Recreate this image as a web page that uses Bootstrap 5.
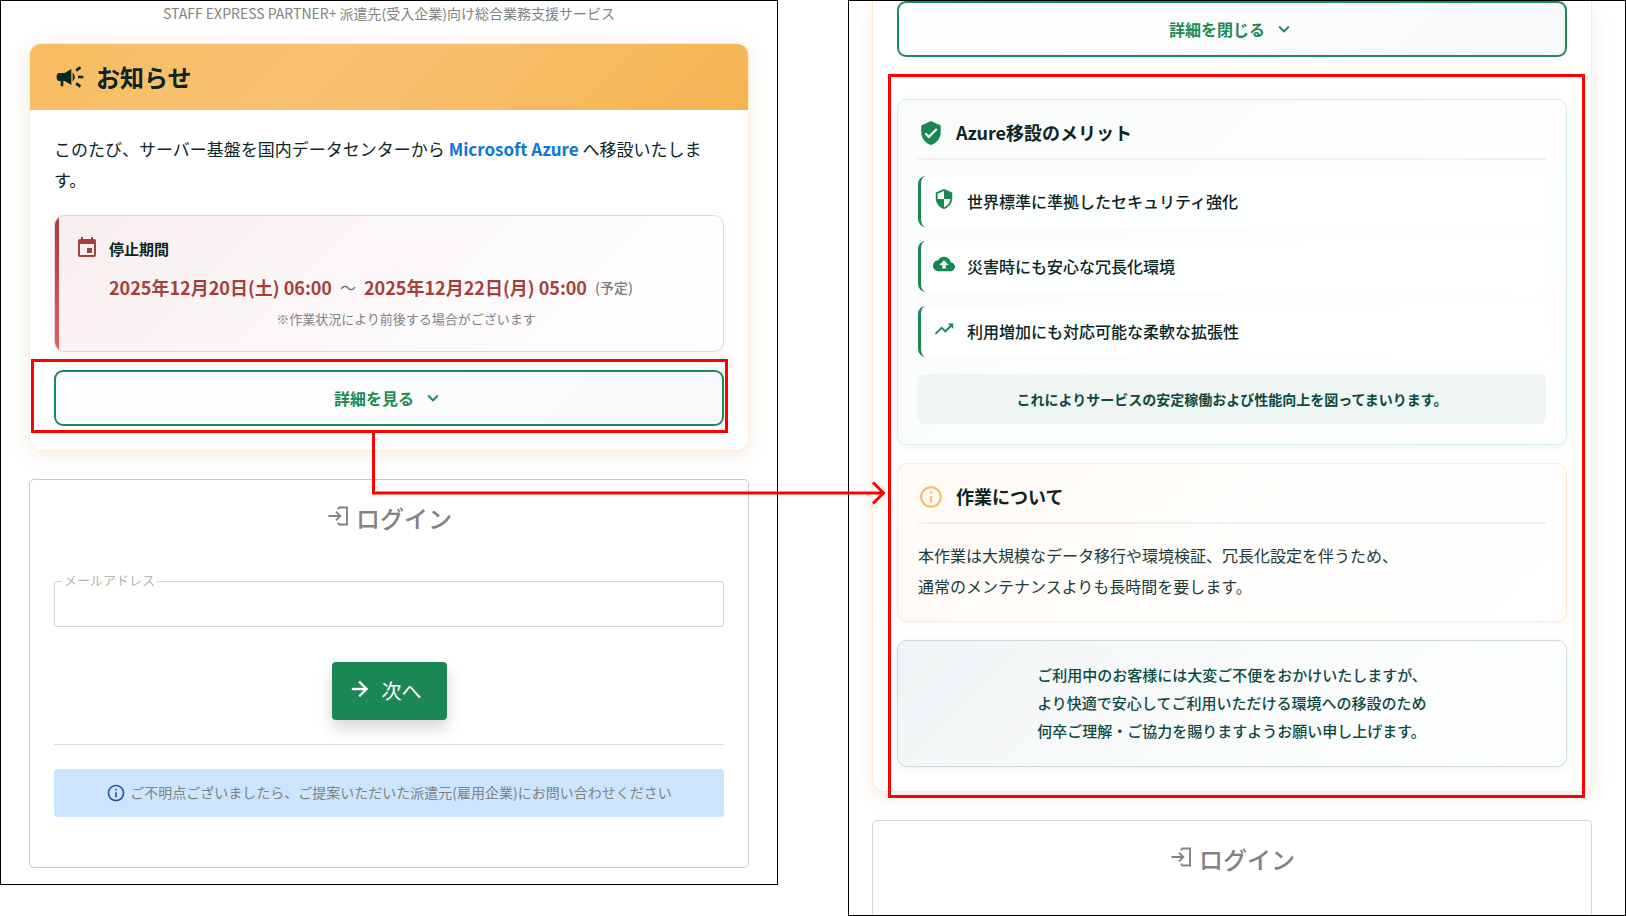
<!DOCTYPE html>
<html lang="ja">
<head>
<meta charset="utf-8">
<meta name="viewport" content="width=device-width, initial-scale=1">
<title>STAFF EXPRESS PARTNER+ ログイン</title>
<link rel="stylesheet" href="https://cdn.jsdelivr.net/npm/bootstrap@5.3.0/dist/css/bootstrap.min.css">
<style>
  body { font-family: "Noto Sans CJK JP", "Noto Sans", sans-serif; color: #0b2523; background: #fff; }
  .page { gap: 70px; }
  .screen { flex: 1 1 0; min-width: 0; border: 1px solid #000; background: #fff; }
  .screen-top { padding: 2px 28px 16px; }
  .screen-more { padding: 0 33px 0 23px; overflow: hidden; }
  .tagline { font-size: 14px; line-height: 21px; margin-bottom: 19px; color: #828282; }

  .notice { border: 1px solid #fdecd3; border-radius: 12px; margin-bottom: 28px; box-shadow: 0 4px 20px rgba(170, 130, 60, .14); }
  .notice-open { border-top: 0; border-radius: 0 0 12px 12px; }
  .notice-head { height: 66px; gap: 10px; padding: 0 24px; border-radius: 11px 11px 0 0; font-size: 24px; font-weight: 700; background: linear-gradient(135deg, #f8bd62 0%, #f8c273 40%, #f5b452 100%); }
  .notice-body { padding: 23px 24px 24px; }
  .notice-text { font-size: 17px; line-height: 31px; margin-bottom: 20px; }
  .azure { color: #0a78d4; font-weight: 700; }

  .period { gap: 10px; padding: 20px; margin-bottom: 18px; border: 1px solid #ecd3d5; border-radius: 10px; background: linear-gradient(135deg, #f8eeef 0%, #fcf8f9 50%, #fff 100%); box-shadow: 0 4px 14px rgba(168, 62, 62, .06); overflow: hidden; position: relative; }
  .period::before { content: ""; position: absolute; inset: 0 auto 0 0; width: 4px; background: linear-gradient(#a53f3d, #e06061); }
  .period-title { font-size: 15px; line-height: 26px; font-weight: 700; margin-bottom: 10px; }
  .period-dates { gap: 8px; line-height: 30px; margin-bottom: 6px; }
  .period-date { font-size: 18px; font-weight: 700; color: #a83e3b; }
  .period-tilde { font-size: 16px; color: #5a6a68; }
  .period-plan { font-size: 14px; font-weight: 500; color: #7a7a7a; }
  .period-note { font-size: 13px; line-height: 22px; margin-bottom: 1px; color: #828282; }

  .toggle { height: 56px; gap: 8px; border: 2px solid #1e8a58; border-radius: 9px; font-size: 16px; font-weight: 700; color: #1e8a58; background: linear-gradient(135deg, #fff 0%, #fdfdfd 40%, #f6f8fa 100%); }
  .toggle:hover { border-color: #1e8a58; color: #1e8a58; }

  /* red call-outs laid over the screens */
  .marker { position: absolute; border: 3px solid #f00; pointer-events: none; z-index: 5; }
  .marker-button { inset: -11px -4px -7px -23px; }
  .marker-details { inset: -4px -18px -31px -9px; }
  .marker-arrow { position: absolute; left: 338px; top: 100%; }

  .details { margin-top: 20px; padding-top: 21px; border-top: 1px solid #f0f1f1; }
  .panel-box { padding: 20px; margin-bottom: 18px; border: 1px solid; border-radius: 10px; }
  .merit { border-color: #dceee6; background: linear-gradient(135deg, #f9fcfb, #fcfefd 50%, #fff); box-shadow: 0 2px 8px rgba(30, 138, 88, .09); }
  .work { padding-bottom: 19px; border-color: #fde8cf; background: linear-gradient(135deg, #fffaf5, #fffefc 50%, #fff); box-shadow: 0 2px 8px rgba(245, 180, 82, .08); }
  .closing { padding-bottom: 21px; border-color: #cddada; margin-bottom: 0; background: linear-gradient(135deg, #f0f4f6, #fafbfb 50%, #fff); box-shadow: 0 2px 8px rgba(11, 74, 66, .08); }
  .box-title { gap: 12px; padding-bottom: 12px; margin-bottom: 16px; border-bottom: 2px solid #eff1f1; font-size: 18px; line-height: 24px; font-weight: 700; }
  .merit-list { gap: 14px; margin-bottom: 17px; }
  .merit-item { height: 51px; gap: 12px; padding: 0 12px 2px; border-left: 3px solid #198754; border-radius: 8px; font-size: 16px; font-weight: 500; background: rgba(255, 255, 255, .8); }
  .merit-item svg { margin-bottom: 3px; }
  .merit-sum { padding: 10px; line-height: 30px; font-size: 14px; font-weight: 700; border-radius: 6px; color: #0b4a42; background: #eef5f2; }
  .work-text { font-size: 16px; line-height: 31px; color: #203a38; }
  .closing-text { font-size: 15px; line-height: 28px; font-weight: 500; color: #0b4a42; }

  .login { padding: 20px 24px 50px; border: 1px solid #c8c8c8; border-radius: 5px; background: #fff; }
  .login-cut { border-bottom: 0; border-radius: 5px 5px 0 0; border-color: #d4d6d6; padding-bottom: 20px; }
  .login-title { gap: 5px; font-size: 24px; line-height: 36px; font-weight: 500; color: #828282; }
  .login-title svg { margin-bottom: 4px; }
  .mail { margin-top: 45px; }
  .mail-input { height: 46px; border: 1px solid #cdd3da; border-radius: 3px; }
  .mail-label { position: absolute; left: 8px; top: -11px; padding: 0 2px; font-size: 13px; line-height: 20px; color: #b4b4b4; background: #fff; }
  .next { height: 58px; gap: 10px; margin-top: 35px; padding: 0 25px 0 16px; border: 0; border-radius: 4px; font-size: 20px; font-weight: 400; color: #fff; background: #1a8754; box-shadow: 0 8px 16px rgba(0, 0, 0, .16); }
  .next:hover { color: #fff; background: #1a8754; }
  .next svg { margin-bottom: 4px; }
  .rule { margin: 24px 0; border-top: 1px solid #d8dde2; opacity: 1; }
  .help { padding: 11px 12px 13px; gap: 4px; font-size: 14px; line-height: 24px; border-radius: 4px; color: #828282; background: #cce5ff; }
  .help svg { margin-top: 2px; }
</style>
</head>
<body>
<svg class="d-none" aria-hidden="true">
  <symbol id="i-login" viewBox="0 0 24 24"><path fill="none" stroke="currentColor" stroke-width="1.9" d="M12 3.500H20.500V20.500H12M12 3.500V5.500M12 20.500V18.500M2 12H13.500M9.500 7.700L13.800 12L9.500 16.300"/></symbol>
  <symbol id="i-chevron" viewBox="0 0 24 24"><path fill="currentColor" d="M7.410 8.590L12 13.170l4.590-4.580L18 10l-6 6-6-6z"/></symbol>
  <symbol id="i-info" viewBox="0 0 24 24"><path fill="currentColor" d="M11 7h2v2h-2zm0 4h2v6h-2zm1-9C6.480 2 2 6.480 2 12s4.480 10 10 10 10-4.480 10-10S17.520 2 12 2zm0 18c-4.410 0-8-3.590-8-8s3.590-8 8-8 8 3.590 8 8-3.590 8-8 8z"/></symbol>
</svg>

<div class="page d-flex align-items-start min-vh-100">
  <main class="screen screen-top">
    <p class="tagline text-center">STAFF EXPRESS PARTNER+ 派遣先(受入企業)向け総合業務支援サービス</p>

    <section class="notice card">
      <h1 class="notice-head d-flex align-items-center mb-0">
        <svg width="32" height="32" viewBox="0 0 24 24" fill="currentColor"><path d="M18 11v2h4v-2h-4zm-2 6.610c.96.71 2.210 1.650 3.200 2.390.4-.53.8-1.070 1.200-1.600-.99-.74-2.240-1.680-3.200-2.400-.4.54-.8 1.080-1.200 1.610zM20.400 5.600c-.4-.53-.8-1.070-1.200-1.600-.99.74-2.240 1.680-3.200 2.400.4.53.8 1.070 1.200 1.600.96-.72 2.210-1.650 3.200-2.400zM4 9c-1.100 0-2 .9-2 2v2c0 1.100.9 2 2 2h1v4h2v-4h1l5 3V6L8 9H4zm11.500 3c0-1.330-.58-2.530-1.500-3.350v6.690c.92-.81 1.500-2.010 1.500-3.340z"/></svg>
        お知らせ
      </h1>
      <div class="card-body notice-body">
        <p class="notice-text">このたび、サーバー基盤を国内データセンターから <span class="azure">Microsoft Azure</span> へ移設いたします。</p>
        <div class="period d-flex align-items-start">
          <svg class="flex-shrink-0" width="24" height="24" viewBox="0 0 24 24" fill="#a83e3b"><path d="M17 12h-5v5h5v-5zM16 1v2H8V1H6v2H5c-1.110 0-1.990.9-1.990 2L3 19c0 1.100.89 2 2 2h14c1.100 0 2-.9 2-2V5c0-1.100-.9-2-2-2h-1V1h-2zm3 18H5V8h14v11z"/></svg>
          <div class="flex-grow-1">
            <div class="period-title">停止期間</div>
            <div class="period-dates d-flex flex-wrap align-items-center">
              <span class="period-date">2025年12月20日(土) 06:00</span>
              <span class="period-tilde">〜</span>
              <span class="period-date">2025年12月22日(月) 05:00</span>
              <span class="period-plan">(予定)</span>
            </div>
            <div class="period-note text-center">※作業状況により前後する場合がございます</div>
          </div>
        </div>
        <div class="position-relative">
          <button type="button" class="toggle btn w-100 d-flex align-items-center justify-content-center">詳細を見る
            <svg width="22" height="22"><use href="#i-chevron"/></svg>
          </button>
          <div class="marker marker-button">
            <svg class="marker-arrow" width="516" height="76" viewBox="0 0 516 76" fill="none" stroke="#f00" stroke-width="3"><path d="M1.500 0V63H511M501 52.500L511.500 63L501 73.500"/></svg>
          </div>
        </div>
      </div>
    </section>

    <form class="login">
      <h2 class="login-title d-flex align-items-center justify-content-center mb-0"><svg width="25" height="24"><use href="#i-login"/></svg>ログイン</h2>
      <div class="mail position-relative">
        <input type="email" id="mail" class="mail-input form-control">
        <label for="mail" class="mail-label">メールアドレス</label>
      </div>
      <button type="button" class="next btn d-flex align-items-center mx-auto">
        <svg width="24" height="24" viewBox="0 0 24 24" fill="currentColor" stroke="currentColor" stroke-width=".4"><path d="M12 4l-1.410 1.410L16.170 11H4v2h12.170l-5.580 5.590L12 20l8-8z"/></svg>
        次へ
      </button>
      <hr class="rule">
      <div class="help d-flex align-items-center justify-content-center">
        <svg width="20" height="20" color="#2a5596"><use href="#i-info"/></svg>
        ご不明点ございましたら、ご提案いただいた派遣元(雇用企業)にお問い合わせください
      </div>
    </form>
  </main>

  <section class="screen screen-more align-self-stretch d-flex flex-column">
    <div class="notice notice-open card">
      <div class="card-body px-4 pt-0 pb-4">
        <button type="button" class="toggle btn w-100 d-flex align-items-center justify-content-center">詳細を閉じる
          <svg width="22" height="22"><use href="#i-chevron"/></svg>
        </button>
        <div class="details position-relative">
          <section class="panel-box merit">
            <h3 class="box-title d-flex align-items-start">
              <svg width="26" height="26" viewBox="0 0 24 24" fill="#198754"><path d="M12 1L3 5v6c0 5.550 3.840 10.740 9 12 5.160-1.260 9-6.450 9-12V5l-9-4zm-2 16l-4-4 1.410-1.410L10 14.170l6.590-6.590L18 9l-8 8z"/></svg>
              Azure移設のメリット
            </h3>
            <ul class="merit-list list-unstyled d-flex flex-column">
              <li class="merit-item d-flex align-items-center">
                <svg width="22" height="22" viewBox="0 0 24 24" fill="#198754"><path d="M12 1L3 5v6c0 5.550 3.840 10.740 9 12 5.160-1.260 9-6.450 9-12V5l-9-4zm0 10.990h7c-.53 4.120-3.280 7.790-7 8.940V12H5V6.300l7-3.110v8.800z"/></svg>
                世界標準に準拠したセキュリティ強化
              </li>
              <li class="merit-item d-flex align-items-center">
                <svg width="22" height="22" viewBox="0 0 24 24" fill="#198754"><path d="M19.350 10.040C18.670 6.590 15.640 4 12 4 9.110 4 6.600 5.640 5.350 8.040 2.340 8.360 0 10.910 0 14c0 3.310 2.690 6 6 6h13c2.760 0 5-2.240 5-5 0-2.640-2.050-4.780-4.650-4.960zM14 13v4h-4v-4H7l5-5 5 5h-3z"/></svg>
                災害時にも安心な冗長化環境
              </li>
              <li class="merit-item d-flex align-items-center">
                <svg width="22" height="22" viewBox="0 0 24 24" fill="#198754"><path d="M16 6l2.290 2.290-4.880 4.880-4-4L2 16.590 3.410 18l6-6 4 4 6.300-6.290L22 12V6z"/></svg>
                利用増加にも対応可能な柔軟な拡張性
              </li>
            </ul>
            <p class="merit-sum text-center mb-0">これによりサービスの安定稼働および性能向上を図ってまいります。</p>
          </section>
          <section class="panel-box work">
            <h3 class="box-title d-flex align-items-start">
              <svg width="26" height="26" color="#f8ba60"><use href="#i-info"/></svg>
              作業について
            </h3>
            <p class="work-text mb-0">本作業は大規模なデータ移行や環境検証、冗長化設定を伴うため、<br>通常のメンテナンスよりも長時間を要します。</p>
          </section>
          <section class="panel-box closing d-flex justify-content-center">
            <p class="closing-text mb-0">ご利用中のお客様には大変ご不便をおかけいたしますが、<br>より快適で安心してご利用いただける環境への移設のため<br>何卒ご理解・ご協力を賜りますようお願い申し上げます。</p>
          </section>
          <div class="marker marker-details"></div>
        </div>
      </div>
    </div>
    <div class="login login-cut flex-grow-1">
      <h2 class="login-title d-flex align-items-center justify-content-center mb-0"><svg width="25" height="24"><use href="#i-login"/></svg>ログイン</h2>
    </div>
  </section>
</div>
<script src="https://cdn.jsdelivr.net/npm/bootstrap@5.3.0/dist/js/bootstrap.bundle.min.js"></script>
</body>
</html>
